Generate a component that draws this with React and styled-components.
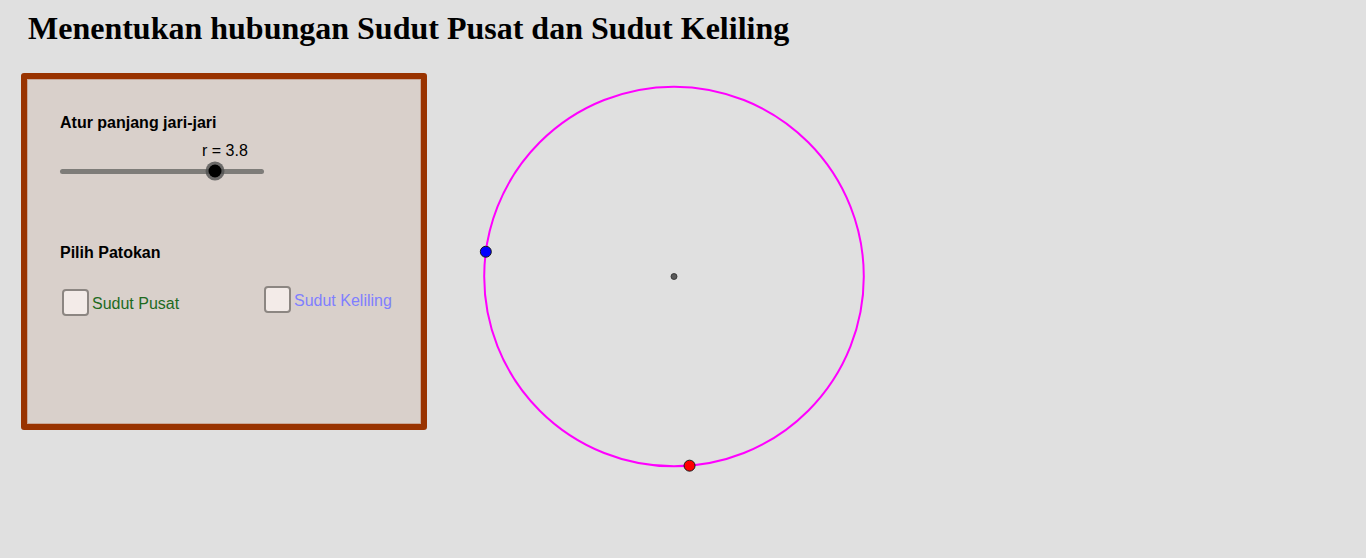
import React from 'react';
import styled, { createGlobalStyle } from 'styled-components';

const GlobalStyle = createGlobalStyle`
  html, body {
    margin: 0;
    padding: 0;
    background: #e0e0e0;
  }
  body {
    font-family: "Liberation Sans", Arial, sans-serif;
  }
`;

const Page = styled.div`
  width: 1366px;
  height: 558px;
  overflow: hidden;
  box-sizing: border-box;
  padding-left: 21px;
`;

const Title = styled.h1`
  margin: 0;
  padding: 8px 0 0 7px;
  font: bold 32px/40px "Liberation Serif", "Times New Roman", serif;
  color: #000;
`;

const Main = styled.div`
  display: flex;
  align-items: flex-start;
  margin-top: 25px;
`;

const Panel = styled.div`
  box-sizing: border-box;
  width: 406px;
  height: 357px;
  border: 6px solid #993300;
  border-radius: 3px;
  background: #d9d0cb;
  box-shadow: inset 0 0 0 1px #c9a898;
  padding: 35px 0 0 33px;
  display: flex;
  flex-direction: column;
`;

const Heading = styled.div`
  font-weight: bold;
  font-size: 16px;
  line-height: 18px;
  color: #000;
  margin-top: ${p => p.$gap || 0}px;
`;

const Slider = styled.div`
  width: 204px;
  margin-top: 10px;
`;

const SliderLabel = styled.div`
  font-size: 16px;
  line-height: 18px;
  color: #000;
  padding-left: 142px;
`;

const TrackArea = styled.div`
  position: relative;
  height: 20px;
  margin-top: 1px;
  display: flex;
  align-items: center;
`;

const Track = styled.div`
  width: 100%;
  height: 5px;
  border-radius: 3px;
  background: #7e7c79;
`;

const Thumb = styled.div`
  position: absolute;
  top: 50%;
  width: 13px;
  height: 13px;
  border-radius: 50%;
  background: #000;
  transform: translate(-50%, -50%);
  box-shadow: 0 0 0 3px rgba(80, 80, 80, 0.8);
`;

const Choices = styled.div`
  display: flex;
  align-items: flex-start;
  margin-top: 24px;
  padding-left: 2px;
`;

const Choice = styled.label`
  flex: none;
  display: flex;
  align-items: center;
  gap: 3px;
  width: ${p => (p.$width ? `${p.$width}px` : 'auto')};
  margin-top: ${p => p.$drop || 0}px;
  font-size: 16px;
  line-height: 18px;
  color: ${p => p.$color};
`;

const Box = styled.span`
  box-sizing: border-box;
  width: 27px;
  height: 27px;
  border: 2px solid #8c8682;
  border-radius: 4px;
  background: #f3ebe8;
  flex-shrink: 0;
`;

const Label = styled.span`
  padding-top: 3px;
`;

const Board = styled.svg`
  display: block;
  margin-left: 13px;
`;

const center = { x: 234, y: 203.5 };
const radius = 189.8;

const onCircle = deg => ({
  x: center.x + radius * Math.cos((deg * Math.PI) / 180),
  y: center.y + radius * Math.sin((deg * Math.PI) / 180),
});

function RadiusSlider({ value, min, max }) {
  const pct = ((value - min) / (max - min)) * 100;
  return (
    <Slider>
      <SliderLabel>r = {value}</SliderLabel>
      <TrackArea>
        <Track />
        <Thumb style={{ left: `${pct}%` }} />
      </TrackArea>
    </Slider>
  );
}

function Construction() {
  const blue = onCircle(187.5);
  const red = onCircle(85.3);
  return (
    <Board width="500" height="420" viewBox="0 0 500 420">
      <circle cx={center.x} cy={center.y} r={radius} fill="none" stroke="#ff00ff" strokeWidth="2" />
      <circle cx={center.x} cy={center.y} r="3" fill="#5a5a5a" stroke="#2a2a2a" strokeWidth="0.8" />
      <circle cx={blue.x} cy={blue.y} r="5.5" fill="#0000ff" stroke="#1a1a1a" strokeWidth="1" />
      <circle cx={red.x} cy={red.y} r="5.5" fill="#ff0000" stroke="#1a1a1a" strokeWidth="1" />
    </Board>
  );
}

export default function App() {
  return (
    <>
      <GlobalStyle />
      <Page>
        <Title>Menentukan hubungan Sudut Pusat dan Sudut Keliling</Title>
        <Main>
          <Panel>
            <Heading>Atur panjang jari-jari</Heading>
            <RadiusSlider value={3.8} min={0} max={5} />
            <Heading $gap={63}>Pilih Patokan</Heading>
            <Choices>
              <Choice $color="#1e6a1e" $drop={3} $width={202}>
                <Box />
                <Label>Sudut Pusat</Label>
              </Choice>
              <Choice $color="#7f7fff">
                <Box />
                <Label>Sudut Keliling</Label>
              </Choice>
            </Choices>
          </Panel>
          <Construction />
        </Main>
      </Page>
    </>
  );
}
